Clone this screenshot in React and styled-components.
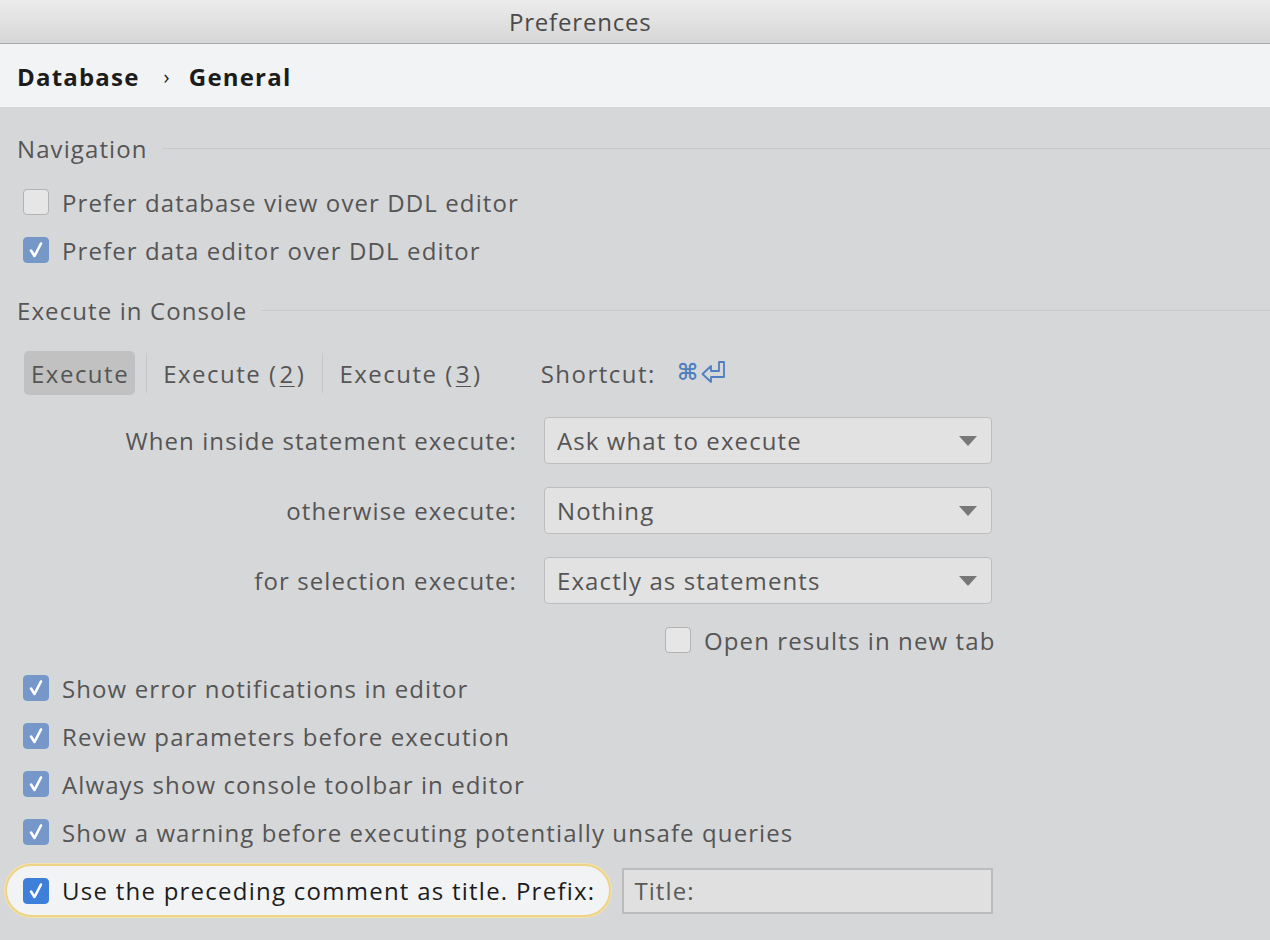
import React from 'react';
import styled, { createGlobalStyle } from 'styled-components';

const GlobalStyle = createGlobalStyle`
    html, body {
        margin: 0;
        padding: 0;
        background: #d6d7d9;
    }
    body {
        font-family: "Open Sans", Roboto, sans-serif;
        letter-spacing: 1.1px;
        color: #505050;
    }
`;

const Window = styled.div`
    width: 1270px;
    height: 940px;
    overflow: hidden;
    background: #d6d7d9;
`;

const TitleBar = styled.div`
    height: 43px;
    border-bottom: 1px solid #a9a9a9;
    background: linear-gradient(#ececec, #d6d6d6);
    display: flex;
    align-items: center;
    padding-left: 509px;
    font-size: 24px;
    letter-spacing: 0.8px;
    color: #4a4a4a;
`;

const Breadcrumb = styled.div`
    height: 63px;
    background: #f2f3f5;
    display: flex;
    align-items: center;
    padding: 1px 0 0 17px;
    box-sizing: border-box;
    font-size: 24px;
    font-weight: bold;
    letter-spacing: 1.2px;
    color: #1c1c1c;
    > span.sep {
        font-weight: normal;
        font-size: 20px;
        margin: 0 18px 0 24px;
    }
`;

const Body = styled.div`
    padding: 0 0 0 17px;
`;

const SectionTitle = styled.div`
    display: flex;
    align-items: center;
    height: 36px;
    margin-top: ${props => props.top}px;
    font-size: 24px;
    color: #555;
    &::after {
        content: '';
        flex: 1;
        height: 1px;
        background: #c8c9cb;
        margin-left: 14px;
    }
`;

const CheckGroup = styled.div`
    margin-top: ${props => props.top || 0}px;
`;

const CheckRow = styled.label`
    display: flex;
    align-items: center;
    height: 48px;
    margin-left: ${props => props.indent ?? 6}px;
    font-size: 24px;
    color: #555;
`;

const Box = styled.span`
    width: 26px;
    height: 26px;
    box-sizing: border-box;
    border-radius: 4px;
    margin-right: 13px;
    display: flex;
    align-items: center;
    justify-content: center;
    flex-shrink: 0;
    background: ${props => props.checked ? (props.active ? '#3d7fd9' : '#7598c8') : '#e6e6e6'};
    border: 1px solid ${props => props.checked ? (props.active ? '#3d7fd9' : '#7598c8') : '#b3b3b3'};
`;

const Check = ({ checked, active }) => (
    <Box checked={checked} active={active}>
        {checked && (
            <svg width="16" height="18" viewBox="0 0 16 18">
                <path d="M3 9.5 L6.5 15 L13 2.5" fill="none" stroke="#fff" strokeWidth="2.6" strokeLinecap="round" strokeLinejoin="round" />
            </svg>
        )}
    </Box>
);

const Checkbox = ({ checked, children, indent }) => (
    <CheckRow indent={indent}>
        <Check checked={checked} />
        {children}
    </CheckRow>
);

const Tabs = styled.div`
    display: flex;
    align-items: center;
    height: 44px;
    margin: 23px 0 0 7px;
`;

const Tab = styled.div`
    height: 44px;
    display: flex;
    align-items: center;
    padding: 0 6px 0 7px;
    border-radius: 5px;
    font-size: 24px;
    letter-spacing: 1.5px;
    color: #555;
    background: ${props => props.selected ? '#c1c1c1' : 'transparent'};
    u {
        margin: 0 2px;
        text-decoration-thickness: 1px;
        text-underline-offset: 3px;
    }
`;

const TabSep = styled.div`
    width: 1px;
    height: 40px;
    background: #c6c6c6;
    margin: 0 9px 0 11px;
`;

const Shortcut = styled.div`
    display: flex;
    align-items: center;
    margin-left: 53px;
    font-size: 24px;
    letter-spacing: 1.5px;
    color: #555;
    > svg { margin-left: 21px; }
`;

const Form = styled.div`
    display: grid;
    grid-template-columns: 500px 448px;
    column-gap: 27px;
    row-gap: 23px;
    margin-top: 22px;
    align-items: center;
`;

const FieldLabel = styled.div`
    text-align: right;
    font-size: 24px;
    color: #555;
`;

const Combo = styled.div`
    height: 47px;
    box-sizing: border-box;
    border: 1px solid #bdbdbd;
    border-radius: 4px;
    background: #e2e2e2;
    display: flex;
    align-items: center;
    justify-content: space-between;
    padding: 0 14px 0 12px;
    font-size: 24px;
    color: #555;
    &::after {
        content: '';
        border-left: 9px solid transparent;
        border-right: 9px solid transparent;
        border-top: 10px solid #777;
    }
`;

const RightOption = styled.div`
    display: flex;
    margin: 12px 0 0 648px;
`;

const Bottom = styled.div`
    display: flex;
    align-items: center;
    margin: 8px 0 0 -12px;
`;

const Pill = styled.div`
    display: flex;
    align-items: center;
    height: 53px;
    box-sizing: border-box;
    padding: 0 14px 0 16px;
    border: 2px solid #ecd387;
    border-radius: 27px;
    background: #f2f3f5;
    box-shadow: 0 0 0 1px #f3e3ad;
    font-size: 24px;
    letter-spacing: 1.25px;
    color: #1c1c1c;
`;

const TextField = styled.div`
    width: 371px;
    height: 46px;
    box-sizing: border-box;
    margin-left: 11px;
    border: 2px solid #bcbcbc;
    background: #e0e0e0;
    display: flex;
    align-items: center;
    padding-left: 10px;
    font-size: 24px;
    color: #5a5a5a;
`;

const ShortcutIcon = () => (
    <svg width="50" height="28" viewBox="0 0 50 28">
        <text x="0" y="21" fontSize="23" fontWeight="bold" fill="#4f7fbf" fontFamily="DejaVu Sans">⌘</text>
        <path d="M47 3 V18 H34 V23 L25.5 15 L34 7 V12 H42 V3 Z" fill="none" stroke="#4f7fbf" strokeWidth="1.8" strokeLinejoin="round" />
    </svg>
);

const App = () => (
    <Window>
        <GlobalStyle />
        <TitleBar>Preferences</TitleBar>
        <Breadcrumb>
            Database<span className="sep">›</span>General
        </Breadcrumb>
        <Body>
            <SectionTitle top={23}>Navigation</SectionTitle>
            <CheckGroup top={12}>
                <Checkbox>Prefer database view over DDL editor</Checkbox>
                <Checkbox checked>Prefer data editor over DDL editor</Checkbox>
            </CheckGroup>
            <SectionTitle top={18}>Execute in Console</SectionTitle>
            <Tabs>
                <Tab selected>Execute</Tab>
                <TabSep />
                <Tab>Execute (<u>2</u>)</Tab>
                <TabSep />
                <Tab>Execute (<u>3</u>)</Tab>
                <Shortcut>Shortcut:<ShortcutIcon /></Shortcut>
            </Tabs>
            <Form>
                <FieldLabel>When inside statement execute:</FieldLabel>
                <Combo>Ask what to execute</Combo>
                <FieldLabel>otherwise execute:</FieldLabel>
                <Combo>Nothing</Combo>
                <FieldLabel>for selection execute:</FieldLabel>
                <Combo>Exactly as statements</Combo>
            </Form>
            <RightOption>
                <Checkbox indent={0}>Open results in new tab</Checkbox>
            </RightOption>
            <Checkbox checked>Show error notifications in editor</Checkbox>
            <Checkbox checked>Review parameters before execution</Checkbox>
            <Checkbox checked>Always show console toolbar in editor</Checkbox>
            <Checkbox checked>Show a warning before executing potentially unsafe queries</Checkbox>
            <Bottom>
                <Pill>
                    <Check checked active />
                    Use the preceding comment as title. Prefix:
                </Pill>
                <TextField>Title:</TextField>
            </Bottom>
        </Body>
    </Window>
);

export default App;
